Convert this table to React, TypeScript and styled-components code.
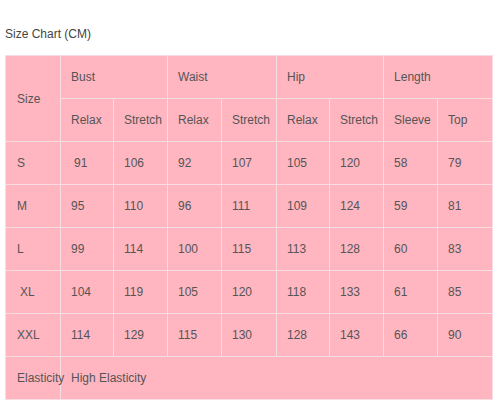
import React from "react";
import styled, { createGlobalStyle } from "styled-components";

const Global = createGlobalStyle`
  html, body { margin: 0; padding: 0; background: #fff; }
  body { font-family: Arial, "Liberation Sans", Helvetica, sans-serif; }
`;

const Page = styled.div`
  padding: 27px 5px 0 5px;
`;

const Title = styled.div`
  font-size: 12px;
  line-height: 14px;
  color: #444;
  margin-bottom: 14px;
`;

const Table = styled.table`
  border-collapse: collapse;
  table-layout: fixed;
  width: 487px;
  background: #ffb6c1;
`;

const Cell = styled.td<{ $pad?: number }>`
  border: 1px solid #f7dde1;
  height: 43px;
  padding: 0 0 0 ${(p) => p.$pad ?? 10}px;
  box-sizing: border-box;
  font-size: 12px;
  color: #555;
  text-align: left;
  vertical-align: middle;
  white-space: nowrap;
  overflow: visible;
`;

const widths = [55, 53, 54, 54, 55, 53, 54, 54, 55];

const rows: { size: string; sizePad?: number; firstPad?: number; vals: string[] }[] = [
  { size: "S", firstPad: 13, vals: ["91", "106", "92", "107", "105", "120", "58", "79"] },
  { size: "M", vals: ["95", "110", "96", "111", "109", "124", "59", "81"] },
  { size: "L", vals: ["99", "114", "100", "115", "113", "128", "60", "83"] },
  { size: "XL", sizePad: 14, vals: ["104", "119", "105", "120", "118", "133", "61", "85"] },
  { size: "XXL", vals: ["114", "129", "115", "130", "128", "143", "66", "90"] },
];

export default function App() {
  return (
    <>
      <Global />
      <Page>
        <Title>Size Chart (CM)</Title>
        <Table>
          <colgroup>
            {widths.map((w, i) => (
              <col key={i} style={{ width: w }} />
            ))}
          </colgroup>
          <tbody>
            <tr>
              <Cell rowSpan={2} $pad={11}>Size</Cell>
              <Cell colSpan={2}>Bust</Cell>
              <Cell colSpan={2}>Waist</Cell>
              <Cell colSpan={2}>Hip</Cell>
              <Cell colSpan={2}>Length</Cell>
            </tr>
            <tr>
              <Cell>Relax</Cell>
              <Cell>Stretch</Cell>
              <Cell>Relax</Cell>
              <Cell>Stretch</Cell>
              <Cell>Relax</Cell>
              <Cell>Stretch</Cell>
              <Cell>Sleeve</Cell>
              <Cell>Top</Cell>
            </tr>
            {rows.map((r) => (
              <tr key={r.size}>
                <Cell $pad={r.sizePad ?? 11}>{r.size}</Cell>
                {r.vals.map((v, i) => (
                  <Cell key={i} $pad={i === 0 ? r.firstPad : undefined}>
                    {v}
                  </Cell>
                ))}
              </tr>
            ))}
            <tr>
              <Cell $pad={11}>Elasticity</Cell>
              <Cell colSpan={8}>High Elasticity</Cell>
            </tr>
          </tbody>
        </Table>
      </Page>
    </>
  );
}
